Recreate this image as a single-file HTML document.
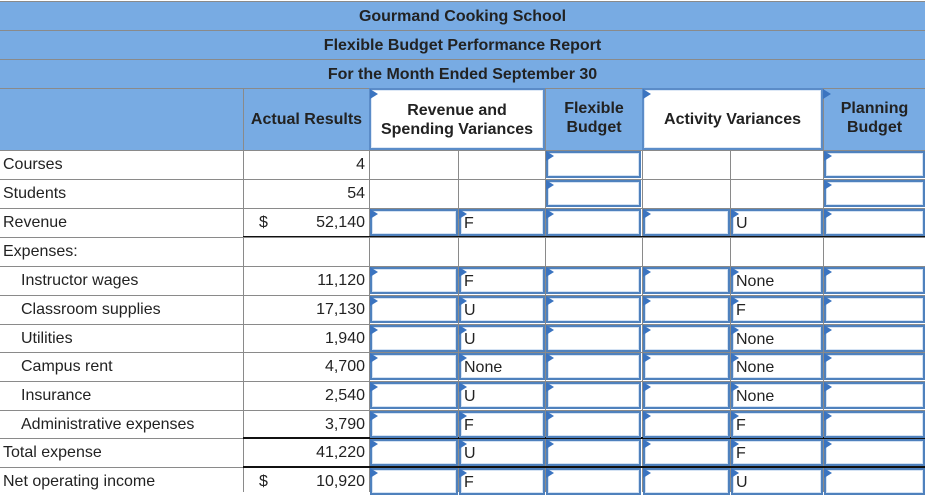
<!DOCTYPE html>
<html><head><meta charset="utf-8"><style>
*{box-sizing:border-box;margin:0;padding:0}
body{width:925px;height:492px;overflow:hidden;background:#fff;font-family:"Liberation Sans",Arial,sans-serif;font-size:16px;color:#222;position:relative}
.a{position:absolute}
.t{position:absolute;left:0;width:925px;height:29px;background:#78abe3;border-top:1px solid #8a8a8a;text-align:center;font-weight:bold;line-height:29px}
.h{position:absolute;top:88px;height:62px;background:#78abe3;border-top:1px solid #8a8a8a;border-left:1px solid #8a8a8a;font-weight:bold;text-align:center;display:flex;align-items:center;justify-content:center;line-height:19px}
.hw{background:#fff;border:2px solid #5b8cc8;box-shadow:inset 0 0 0 1px #dde8f6}
.hl{position:absolute;left:0;width:925px;height:1px;background:#8a8a8a}
.vl{position:absolute;top:150px;height:342px;width:1px;background:#8a8a8a}
.lb{position:absolute;height:29px;line-height:30px}
.v{position:absolute;left:243px;width:122px;text-align:right;height:29px;line-height:30px}
.d{position:absolute;left:259px;height:29px;line-height:30px}
.i{position:absolute;height:27px;background:#fff;border:2px solid #4f81bd;box-shadow:inset 0 0 0 1px #d4e2f3;line-height:25px;padding-left:3px}
.i::before,.tr{content:"";position:absolute;left:-2px;top:-2px;z-index:2;width:0;height:0;border-left:8px solid #3b74c0;border-top:5px solid transparent;border-bottom:5px solid transparent}
.k{position:absolute;left:243px;width:682px;height:2px;background:#111}
</style></head><body>
<div class="t" style="top:1px">Gourmand Cooking School</div>
<div class="t" style="top:30px">Flexible Budget Performance Report</div>
<div class="t" style="top:59px">For the Month Ended September 30</div>
<div class="h" style="left:0;width:243px;border-left:none"></div>
<div class="h" style="left:243px;width:126px">Actual Results</div>
<div class="h hw" style="left:369px;width:176px;padding-top:2px">Revenue and<br>Spending Variances</div>
<div class="h" style="left:545px;width:97px;padding-bottom:4px">Flexible<br>Budget</div>
<div class="h hw" style="left:642px;width:181px">Activity Variances</div>
<div class="h" style="left:823px;width:102px;padding-bottom:4px">Planning<br>Budget</div>
<div class="tr" style="left:370px;top:89px"></div>
<div class="tr" style="left:643px;top:89px"></div>
<div class="tr" style="left:823px;top:89px"></div>

<div class="hl" style="top:150px"></div><div class="hl" style="top:179px"></div><div class="hl" style="top:208px"></div><div class="hl" style="top:237px"></div><div class="hl" style="top:266px"></div><div class="hl" style="top:295px"></div><div class="hl" style="top:324px"></div><div class="hl" style="top:352px"></div><div class="hl" style="top:381px"></div><div class="hl" style="top:410px"></div><div class="hl" style="top:438px"></div><div class="hl" style="top:467px"></div>
<div class="vl" style="left:243px"></div><div class="vl" style="left:369px"></div><div class="vl" style="left:458px"></div><div class="vl" style="left:545px"></div><div class="vl" style="left:642px"></div><div class="vl" style="left:730px"></div><div class="vl" style="left:823px"></div>
<div class="k" style="top:236px;height:1px"></div><div class="k" style="top:437px"></div><div class="k" style="top:466px"></div>

<div class="lb" style="left:3px;top:150px">Courses</div>
<div class="lb" style="left:3px;top:179px">Students</div>
<div class="lb" style="left:3px;top:208px">Revenue</div>
<div class="lb" style="left:3px;top:237px">Expenses:</div>
<div class="lb" style="left:21px;top:266px">Instructor wages</div>
<div class="lb" style="left:21px;top:295px">Classroom supplies</div>
<div class="lb" style="left:21px;top:324px">Utilities</div>
<div class="lb" style="left:21px;top:352px">Campus rent</div>
<div class="lb" style="left:21px;top:381px">Insurance</div>
<div class="lb" style="left:21px;top:410px">Administrative expenses</div>
<div class="lb" style="left:3px;top:438px">Total expense</div>
<div class="lb" style="left:3px;top:467px">Net operating income</div>

<div class="v" style="top:150px">4</div>
<div class="v" style="top:179px">54</div>
<div class="d" style="top:208px">$</div><div class="v" style="top:208px">52,140</div>
<div class="v" style="top:266px">11,120</div>
<div class="v" style="top:295px">17,130</div>
<div class="v" style="top:324px">1,940</div>
<div class="v" style="top:352px">4,700</div>
<div class="v" style="top:381px">2,540</div>
<div class="v" style="top:410px">3,790</div>
<div class="v" style="top:438px">41,220</div>
<div class="d" style="top:467px">$</div><div class="v" style="top:467px">10,920</div>

<div class="i" style="left:546px;top:151px;width:95px"></div><div class="i" style="left:824px;top:151px;width:101px"></div>
<div class="i" style="left:546px;top:180px;width:95px"></div><div class="i" style="left:824px;top:180px;width:101px"></div>

<div class="i" style="left:370px;top:209px;width:88px"></div><div class="i" style="left:459px;top:209px;width:86px">F</div><div class="i" style="left:546px;top:209px;width:95px"></div><div class="i" style="left:643px;top:209px;width:87px"></div><div class="i" style="left:731px;top:209px;width:92px">U</div><div class="i" style="left:824px;top:209px;width:101px"></div>

<div class="i" style="left:370px;top:267px;width:88px"></div><div class="i" style="left:459px;top:267px;width:86px">F</div><div class="i" style="left:546px;top:267px;width:95px"></div><div class="i" style="left:643px;top:267px;width:87px"></div><div class="i" style="left:731px;top:267px;width:92px">None</div><div class="i" style="left:824px;top:267px;width:101px"></div>

<div class="i" style="left:370px;top:296px;width:88px"></div><div class="i" style="left:459px;top:296px;width:86px">U</div><div class="i" style="left:546px;top:296px;width:95px"></div><div class="i" style="left:643px;top:296px;width:87px"></div><div class="i" style="left:731px;top:296px;width:92px">F</div><div class="i" style="left:824px;top:296px;width:101px"></div>

<div class="i" style="left:370px;top:325px;width:88px"></div><div class="i" style="left:459px;top:325px;width:86px">U</div><div class="i" style="left:546px;top:325px;width:95px"></div><div class="i" style="left:643px;top:325px;width:87px"></div><div class="i" style="left:731px;top:325px;width:92px">None</div><div class="i" style="left:824px;top:325px;width:101px"></div>

<div class="i" style="left:370px;top:353px;width:88px"></div><div class="i" style="left:459px;top:353px;width:86px">None</div><div class="i" style="left:546px;top:353px;width:95px"></div><div class="i" style="left:643px;top:353px;width:87px"></div><div class="i" style="left:731px;top:353px;width:92px">None</div><div class="i" style="left:824px;top:353px;width:101px"></div>

<div class="i" style="left:370px;top:382px;width:88px"></div><div class="i" style="left:459px;top:382px;width:86px">U</div><div class="i" style="left:546px;top:382px;width:95px"></div><div class="i" style="left:643px;top:382px;width:87px"></div><div class="i" style="left:731px;top:382px;width:92px">None</div><div class="i" style="left:824px;top:382px;width:101px"></div>

<div class="i" style="left:370px;top:411px;width:88px"></div><div class="i" style="left:459px;top:411px;width:86px">F</div><div class="i" style="left:546px;top:411px;width:95px"></div><div class="i" style="left:643px;top:411px;width:87px"></div><div class="i" style="left:731px;top:411px;width:92px">F</div><div class="i" style="left:824px;top:411px;width:101px"></div>

<div class="i" style="left:370px;top:439px;width:88px"></div><div class="i" style="left:459px;top:439px;width:86px">U</div><div class="i" style="left:546px;top:439px;width:95px"></div><div class="i" style="left:643px;top:439px;width:87px"></div><div class="i" style="left:731px;top:439px;width:92px">F</div><div class="i" style="left:824px;top:439px;width:101px"></div>

<div class="i" style="left:370px;top:468px;width:88px"></div><div class="i" style="left:459px;top:468px;width:86px">F</div><div class="i" style="left:546px;top:468px;width:95px"></div><div class="i" style="left:643px;top:468px;width:87px"></div><div class="i" style="left:731px;top:468px;width:92px">U</div><div class="i" style="left:824px;top:468px;width:101px"></div>
</body></html>
